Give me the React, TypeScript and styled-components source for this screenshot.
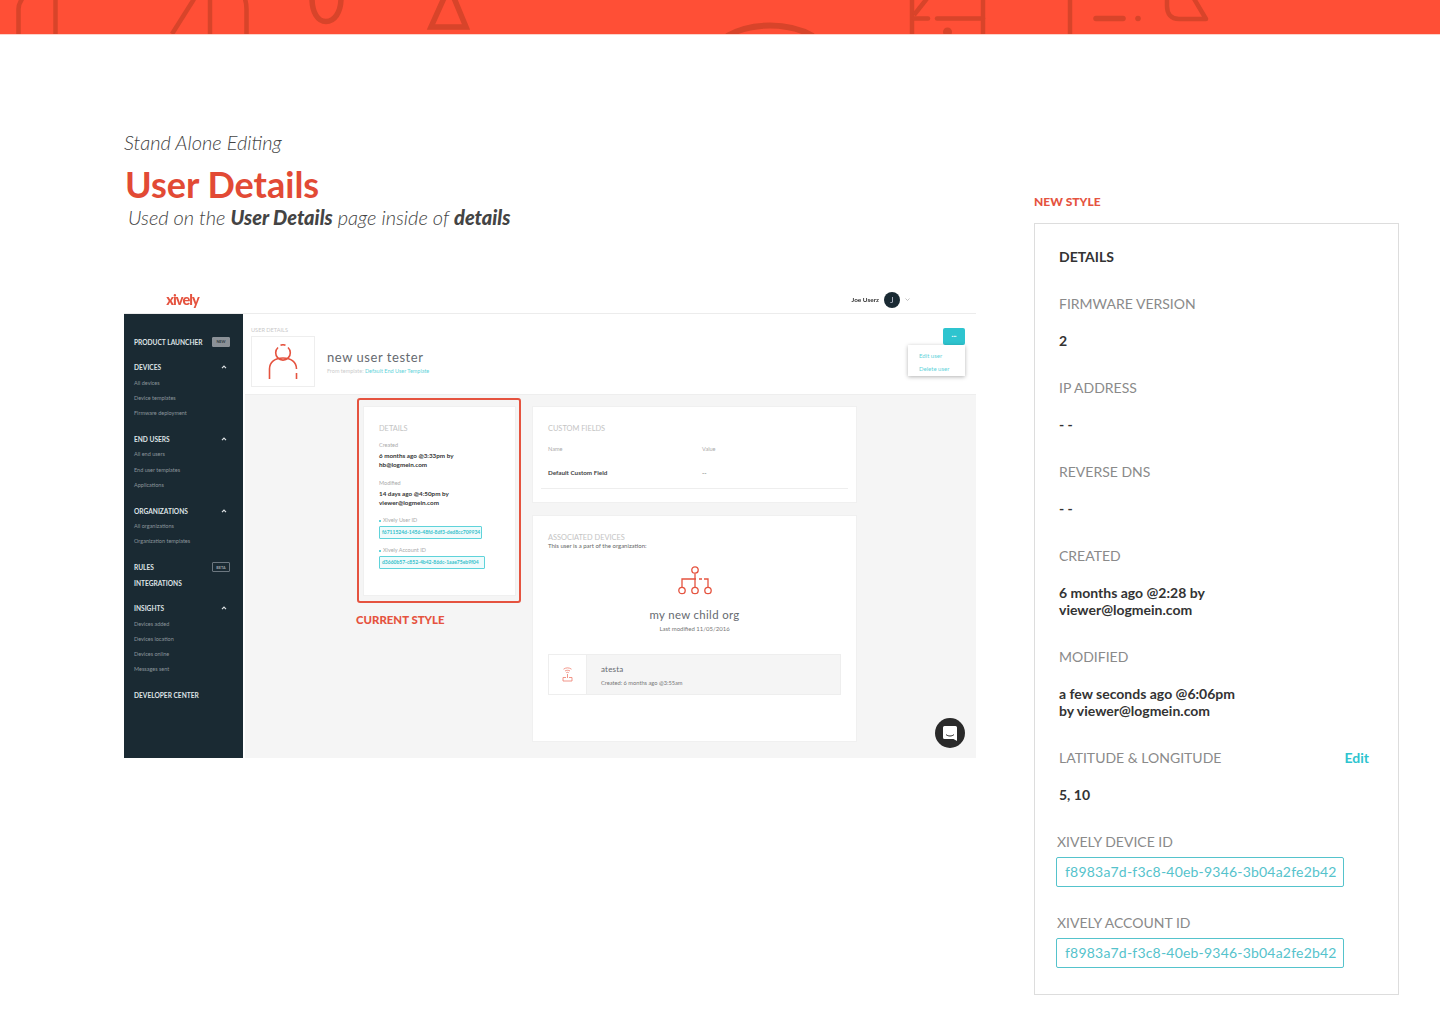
import React from "react";
import styled, { createGlobalStyle } from "styled-components";

const RED = "#e5533f";
const TEAL = "#2ec4cf";
const NAVY = "#1a2a33";
const SANS = `"Lato", "Open Sans", sans-serif`;

const GlobalStyle = createGlobalStyle`
  html, body {
    margin: 0;
    background: #fff;
    font-family: ${SANS};
  }
  * {
    box-sizing: border-box;
  }
`;

const Page = styled.div`
  width: 1440px;
  height: 1024px;
  overflow: hidden;
`;

const Banner = styled.div`
  height: 35px;
  background: #ff4f36;
  border-bottom: 1px solid #fcd3cb;

  svg {
    display: block;
  }
`;

const Main = styled.main`
  display: flex;
  padding-left: 124px;
`;

const LeftColumn = styled.section`
  width: 852px;
  margin-right: 58px;
  padding-top: 95px;
`;

const Kicker = styled.div`
  font-size: 20px;
  line-height: 24px;
  font-style: italic;
  font-weight: 300;
  color: #444;
`;

const Title = styled.h1`
  margin: 8px 0 0 1px;
  font-size: 36px;
  line-height: 44px;
  font-weight: 700;
  color: #e24a35;
`;

const Subtitle = styled.div`
  margin: -1px 0 57px 4px;
  font-size: 20px;
  line-height: 24px;
  font-style: italic;
  font-weight: 300;
  color: #444;

  b {
    font-weight: 900;
  }
`;

const Shot = styled.div`
  height: 472px;
  display: flex;
  flex-direction: column;
  filter: blur(0.25px);
`;

const ShotHeader = styled.header`
  height: 28px;
  flex: none;
  display: flex;
  align-items: center;
  justify-content: space-between;
  border-bottom: 1px solid #ececec;
  padding-right: 66px;
`;

const Logo = styled.div`
  width: 117px;
  text-align: center;
  font-size: 14.5px;
  font-weight: 900;
  letter-spacing: -0.9px;
  color: ${RED};
`;

const Account = styled.div`
  display: flex;
  align-items: center;
  font-size: 6.4px;
  font-weight: 700;
  color: #333;
`;

const AccountAvatar = styled.span`
  width: 16px;
  height: 16px;
  margin: 0 5px;
  border-radius: 50%;
  background: ${NAVY};
  color: #ccd;
  font-size: 8px;
  font-weight: 400;
  display: flex;
  align-items: center;
  justify-content: center;
`;

const ShotBody = styled.div`
  flex: 1;
  display: flex;
  min-height: 0;
`;

const Sidebar = styled.nav`
  width: 119px;
  flex: none;
  padding: 20px 13px 0 10px;
  background: ${NAVY};
`;

const NavGroup = styled.div`
  margin-bottom: 10.5px;
`;

const NavHead = styled.div`
  height: 15.3px;
  display: flex;
  align-items: center;
  justify-content: space-between;
  font-size: 6.6px;
  font-weight: 700;
  color: #dfe3e6;
  white-space: nowrap;
`;

const NavItem = styled.div`
  height: 15.3px;
  display: flex;
  align-items: center;
  font-size: 5.5px;
  color: #8b959b;
  white-space: nowrap;
`;

const NavBadge = styled.span<{ $outline?: boolean }>`
  width: 18px;
  height: 10px;
  display: flex;
  align-items: center;
  justify-content: center;
  border-radius: 1px;
  font-size: 3.8px;
  color: ${(p) => (p.$outline ? "#9aa3a9" : "#2b3840")};
  background: ${(p) => (p.$outline ? "transparent" : "#8b9197")};
  border: 1px solid ${(p) => (p.$outline ? "#6c7780" : "#8b9197")};
`;

const Chevron = styled.svg`
  width: 6px;
  height: 4px;
  margin-right: 3px;
`;

const Content = styled.div`
  flex: 1;
  min-width: 0;
  margin-left: 2px;
  display: flex;
  flex-direction: column;
  position: relative;
`;

const TopBar = styled.div`
  height: 81px;
  flex: none;
  padding: 12px 11px 0 6px;
  background: #fff;
  border-bottom: 1px solid #eee;
  position: relative;
`;

const TinyHeading = styled.div`
  height: 10px;
  font-size: 5.6px;
  line-height: 8px;
  color: #c9c9c9;
`;

const Profile = styled.div`
  display: flex;
  align-items: center;
`;

const ProfileIcon = styled.div`
  width: 64px;
  height: 51px;
  border: 1px solid #eee;
  display: flex;
  align-items: center;
  justify-content: center;
  margin-right: 12px;
`;

const ProfileName = styled.div`
  font-size: 13px;
  line-height: 16px;
  letter-spacing: 0.55px;
  color: #666a70;
`;

const ProfileMeta = styled.div`
  margin-top: 3px;
  font-size: 5.5px;
  color: #ccc;

  span {
    color: #5fd3da;
  }
`;

const MoreButton = styled.div`
  position: absolute;
  top: 14px;
  right: 11px;
  width: 22px;
  height: 17px;
  border-radius: 2px;
  background: ${TEAL};
  color: #fff;
  font-size: 7px;
  font-weight: 900;
  line-height: 13px;
  text-align: center;
`;

const Menu = styled.div`
  position: absolute;
  top: 31px;
  right: 11px;
  width: 57px;
  height: 31px;
  padding: 4px 11px;
  background: #fff;
  box-shadow: 0 1px 4px rgba(0, 0, 0, 0.3);
  font-size: 6px;
  line-height: 13px;
  color: #5fd3da;
`;

const Lower = styled.div`
  flex: 1;
  display: flex;
  align-items: flex-start;
  gap: 11px;
  padding: 3px 0 0 112px;
  background: #f5f5f5;
`;

const StyleColumn = styled.div`
  width: 164px;
`;

const Highlight = styled.div`
  height: 205px;
  padding: 6px 3px 5px 4px;
  border: 2px solid ${RED};
  border-radius: 3px;
`;

const CurrentStyle = styled.div`
  margin: 10px 0 0 -1px;
  font-size: 11.4px;
  line-height: 14px;
  font-weight: 900;
  color: ${RED};
`;

const Card = styled.div<{ $height: number }>`
  height: ${(p) => p.$height}px;
  padding: 17px 15px 0;
  background: #fff;
  border: 1px solid #f0f0f0;
`;

const CardColumn = styled.div`
  width: 325px;
  margin-top: 8px;
  display: flex;
  flex-direction: column;
  gap: 12px;
`;

const CardHeading = styled.div`
  font-size: 7.4px;
  line-height: 9px;
  color: #c4c4c4;
`;

const MiniLabel = styled.div<{ $gap?: number }>`
  margin-top: ${(p) => p.$gap ?? 0}px;
  font-size: 5.5px;
  line-height: 8px;
  color: #aaa;
`;

const MiniValue = styled.div`
  margin-top: 2px;
  font-size: 6.3px;
  line-height: 9.3px;
  font-weight: 700;
  color: #333;
`;

const MiniId = styled.div<{ $width: number }>`
  width: ${(p) => p.$width}px;
  height: 13px;
  margin-top: 2px;
  padding-left: 2px;
  border: 1px solid #5fd3da;
  border-radius: 1px;
  background: #effbfc;
  font-size: 5px;
  font-weight: 700;
  line-height: 11px;
  color: #35bfca;
  white-space: nowrap;
`;

const Dot = styled.i`
  display: inline-block;
  width: 2px;
  height: 2px;
  margin-right: 2px;
  border-radius: 50%;
  background: ${TEAL};
  vertical-align: middle;
`;

const FieldGrid = styled.div`
  display: grid;
  grid-template-columns: 154px 1fr;
  margin-top: 12px;
  font-size: 5.6px;
  line-height: 8px;
  color: #aaa;
`;

const FieldRow = styled(FieldGrid)`
  margin-top: 16px;
  color: #555;
  font-size: 6.3px;

  b {
    font-weight: 700;
    color: #444;
  }
`;

const Rule = styled.hr`
  margin: 11px -7px 0;
  border: 0;
  border-top: 1px solid #eee;
`;

const OrgIntro = styled.div`
  font-size: 6px;
  line-height: 8px;
  color: #666;
`;

const OrgBlock = styled.div`
  margin-top: 16px;
  display: flex;
  flex-direction: column;
  align-items: center;
`;

const OrgName = styled.div`
  margin-top: 12px;
  font-size: 11.4px;
  line-height: 14px;
  letter-spacing: 0.35px;
  color: #666a70;
`;

const OrgDate = styled.div`
  margin-top: 3px;
  font-size: 6px;
  line-height: 8px;
  color: #777;
`;

const DeviceRow = styled.div`
  height: 41px;
  margin-top: 21px;
  display: flex;
  background: #f5f5f5;
  border: 1px solid #eee;
`;

const DeviceIcon = styled.div`
  width: 38px;
  flex: none;
  display: flex;
  align-items: center;
  justify-content: center;
  background: #fff;
  border-right: 1px solid #eee;
`;

const DeviceText = styled.div`
  padding: 9px 0 0 14px;
`;

const DeviceName = styled.div`
  font-size: 8px;
  line-height: 10px;
  letter-spacing: 0.2px;
  color: #666a70;
`;

const DeviceMeta = styled.div`
  margin-top: 5px;
  font-size: 5.7px;
  line-height: 8px;
  color: #777;
`;

const ChatButton = styled.div`
  position: absolute;
  right: 11px;
  bottom: 10px;
  width: 30px;
  height: 30px;
  border-radius: 50%;
  background: #2a2a2a;
  display: flex;
  align-items: center;
  justify-content: center;
`;

const RightColumn = styled.aside`
  width: 365px;
  padding-top: 160px;
`;

const PanelCaption = styled.div`
  font-size: 12px;
  line-height: 14px;
  font-weight: 900;
  color: ${RED};
  margin-bottom: 14px;
`;

const Panel = styled.div`
  border: 1px solid #ddd;
  padding: 24px 0 25px;
  height: 772px;
`;

const PanelHeading = styled.div`
  padding-left: 24px;
  margin-bottom: 30px;
  font-size: 14px;
  line-height: 17px;
  font-weight: 700;
  color: #333;
`;

const Field = styled.div`
  padding: 0 29px 0 24px;
  margin-bottom: 30px;
`;

const FieldHead = styled.div`
  display: flex;
  justify-content: space-between;
`;

const Label = styled.div`
  font-size: 14px;
  line-height: 17px;
  color: #8a8a8a;
`;

const EditLink = styled.div`
  font-size: 14px;
  line-height: 17px;
  font-weight: 700;
  color: ${TEAL};
`;

const Value = styled.div`
  margin-top: 20px;
  font-size: 14px;
  line-height: 17px;
  font-weight: 700;
  color: #333;
`;

const IdField = styled.div`
  padding-left: 21px;
  margin-top: 27px;

  ${Label} {
    padding-left: 1px;
  }
`;

const IdBox = styled.div`
  width: 288px;
  height: 30px;
  margin-top: 7px;
  padding-left: 8px;
  border: 1px solid #55c3cc;
  border-radius: 2px;
  font-size: 14px;
  line-height: 28px;
  letter-spacing: 0.2px;
  color: #55c3cc;
  white-space: nowrap;
`;

const BannerPattern = () => (
  <svg width="1440" height="34" viewBox="0 0 1440 34" fill="none" stroke="#d8442a" strokeWidth="4.5">
    <path d="M18.5 34V9C18.5 5 20 2 22 -1" />
    <path d="M55.5 0V34" />
    <path d="M172 34L194 -1" />
    <path d="M210 0V34" />
    <path d="M246.5 34V9C246.5 5 246 2 245 -1" />
    <path d="M312 -2C312 13 318 21.5 326 21.5C334 21.5 341 13 341 -2" strokeWidth="5.5" />
    <path d="M444 -2L431 27H466L454 -2" strokeWidth="5.5" />
    <path d="M727 36C752 22 788 22 813 36" strokeWidth="6" />
    <path d="M912 0V34" />
    <path d="M914 15L929 -4" />
    <path d="M914 18.5H928" strokeLinecap="round" />
    <path d="M937 18.5H983" strokeLinecap="round" />
    <path d="M983 0V34" />
    <circle cx="947.5" cy="32" r="4.5" fill="#d8442a" stroke="none" />
    <path d="M1070 0V34" />
    <path d="M1096 18.5H1123" strokeWidth="5.5" strokeLinecap="round" />
    <circle cx="1138" cy="18.5" r="2.8" fill="#d8442a" stroke="none" />
    <path d="M1167 -2V6C1167 14 1171 19 1179 19H1206L1193 -3" strokeLinejoin="round" />
  </svg>
);

const PersonIcon = () => (
  <svg width="30" height="36" viewBox="0 0 30 36" fill="none" stroke={RED} strokeWidth="1.6">
    <path d="M12.5 1.2a7.2 7.2 0 0 1 5 0" />
    <path d="M10 3.5a7.3 7.3 0 1 0 10 0" />
    <path d="M1.5 35V25C1.5 18 7 14 15 14C23 14 28.5 18 28.5 25" />
    <path d="M28.5 29V35" />
  </svg>
);

const OrgIcon = () => (
  <svg width="34" height="30" viewBox="0 0 34 30" fill="none" stroke={RED} strokeWidth="1.3">
    <circle cx="17" cy="4" r="3.2" />
    <path d="M17 7.5V21" />
    <path d="M4 21V13H18M21 13H24M26 13H30V21" />
    <circle cx="4" cy="24.5" r="3.2" />
    <circle cx="17" cy="24.5" r="3.2" />
    <circle cx="30" cy="24.5" r="3.2" />
  </svg>
);

const DeviceGlyph = () => (
  <svg width="11" height="15" viewBox="0 0 11 15" fill="none" stroke="#ee7c6c" strokeWidth="0.8">
    <path d="M1.5 2.2C4 .4 7 .4 9.5 2.2M3 4C4.5 3 6.5 3 8 4M4.2 5.7C5 5.2 6 5.2 6.8 5.7" />
    <path d="M5.5 7V11M1 10.5V14H10V10.5H7M4 10.5H1" />
  </svg>
);

const NavChevron = () => (
  <Chevron viewBox="0 0 6 4" fill="none" stroke="#dfe3e6" strokeWidth="1.2">
    <path d="M1 3.2L3 1.2L5 3.2" />
  </Chevron>
);

const navGroups = [
  { title: "DEVICES", items: ["All devices", "Device templates", "Firmware deployment"] },
  { title: "END USERS", items: ["All end users", "End user templates", "Applications"] },
  { title: "ORGANIZATIONS", items: ["All organizations", "Organization templates"] }
];

const insights = ["Devices added", "Devices location", "Devices online", "Messages sent"];

const detailFields = [
  { label: "FIRMWARE VERSION", value: ["2"] },
  { label: "IP ADDRESS", value: ["- -"] },
  { label: "REVERSE DNS", value: ["- -"] },
  { label: "CREATED", value: ["6 months ago @2:28 by", "viewer@logmein.com"] },
  { label: "MODIFIED", value: ["a few seconds ago @6:06pm", "by viewer@logmein.com"] }
];

const DEVICE_ID = "f8983a7d-f3c8-40eb-9346-3b04a2fe2b42";

const App: React.FC = () => {
  return (
    <Page>
      <GlobalStyle />
      <Banner>
        <BannerPattern />
      </Banner>
      <Main>
        <LeftColumn>
          <Kicker>Stand Alone Editing</Kicker>
          <Title>User Details</Title>
          <Subtitle>
            Used on the <b>User Details</b> page inside of <b>details</b>
          </Subtitle>
          <Shot>
            <ShotHeader>
              <Logo>xively</Logo>
              <Account>
                Joe Userz
                <AccountAvatar>J</AccountAvatar>
                <svg width="5" height="3" viewBox="0 0 5 3" fill="none" stroke="#aaa" strokeWidth="0.7">
                  <path d="M.5.5L2.5 2.5L4.5.5" />
                </svg>
              </Account>
            </ShotHeader>
            <ShotBody>
              <Sidebar>
                <NavGroup>
                  <NavHead>
                    PRODUCT LAUNCHER
                    <NavBadge>NEW</NavBadge>
                  </NavHead>
                </NavGroup>
                {navGroups.map((group) => (
                  <NavGroup key={group.title}>
                    <NavHead>
                      {group.title}
                      <NavChevron />
                    </NavHead>
                    {group.items.map((item) => (
                      <NavItem key={item}>{item}</NavItem>
                    ))}
                  </NavGroup>
                ))}
                <NavGroup>
                  <NavHead>
                    RULES
                    <NavBadge $outline>BETA</NavBadge>
                  </NavHead>
                  <NavHead>INTEGRATIONS</NavHead>
                </NavGroup>
                <NavGroup>
                  <NavHead>
                    INSIGHTS
                    <NavChevron />
                  </NavHead>
                  {insights.map((item) => (
                    <NavItem key={item}>{item}</NavItem>
                  ))}
                </NavGroup>
                <NavHead>DEVELOPER CENTER</NavHead>
              </Sidebar>
              <Content>
                <TopBar>
                  <TinyHeading>USER DETAILS</TinyHeading>
                  <Profile>
                    <ProfileIcon>
                      <PersonIcon />
                    </ProfileIcon>
                    <div>
                      <ProfileName>new user tester</ProfileName>
                      <ProfileMeta>
                        From template: <span>Default End User Template</span>
                      </ProfileMeta>
                    </div>
                  </Profile>
                  <MoreButton>...</MoreButton>
                  <Menu>
                    Edit user
                    <br />
                    Delete user
                  </Menu>
                </TopBar>
                <Lower>
                  <StyleColumn>
                    <Highlight>
                      <Card $height={190}>
                        <CardHeading>DETAILS</CardHeading>
                        <MiniLabel $gap={8}>Created</MiniLabel>
                        <MiniValue>
                          6 months ago @3:33pm by
                          <br />
                          hb@logmein.com
                        </MiniValue>
                        <MiniLabel $gap={9}>Modified</MiniLabel>
                        <MiniValue>
                          14 days ago @4:50pm by
                          <br />
                          viewer@logmein.com
                        </MiniValue>
                        <MiniLabel $gap={9}>
                          <Dot />
                          Xively User ID
                        </MiniLabel>
                        <MiniId $width={103}>f6711524d-1456-48fd-8df3-ded8cc709934</MiniId>
                        <MiniLabel $gap={7}>
                          <Dot />
                          Xively Account ID
                        </MiniLabel>
                        <MiniId $width={106}>d3660b57-c852-4b42-86dc-1aae75eb9f04</MiniId>
                      </Card>
                    </Highlight>
                    <CurrentStyle>CURRENT STYLE</CurrentStyle>
                  </StyleColumn>
                  <CardColumn>
                    <Card $height={97}>
                      <CardHeading>CUSTOM FIELDS</CardHeading>
                      <FieldGrid>
                        <span>Name</span>
                        <span>Value</span>
                      </FieldGrid>
                      <FieldRow>
                        <b>Default Custom Field</b>
                        <span>--</span>
                      </FieldRow>
                      <Rule />
                    </Card>
                    <Card $height={227}>
                      <CardHeading>ASSOCIATED DEVICES</CardHeading>
                      <OrgIntro>This user is a part of the organization:</OrgIntro>
                      <OrgBlock>
                        <OrgIcon />
                        <OrgName>my new child org</OrgName>
                        <OrgDate>Last modified 11/05/2016</OrgDate>
                      </OrgBlock>
                      <DeviceRow>
                        <DeviceIcon>
                          <DeviceGlyph />
                        </DeviceIcon>
                        <DeviceText>
                          <DeviceName>atesta</DeviceName>
                          <DeviceMeta>Created: 6 months ago @3:55am</DeviceMeta>
                        </DeviceText>
                      </DeviceRow>
                    </Card>
                  </CardColumn>
                </Lower>
                <ChatButton>
                  <svg width="14" height="15" viewBox="0 0 14 15">
                    <path d="M1.5 0H12.5A1.5 1.5 0 0 1 14 1.5V15L10.5 13H1.5A1.5 1.5 0 0 1 0 11.5V1.5A1.5 1.5 0 0 1 1.5 0Z" fill="#fff" />
                    <path d="M3 8.5C5 10.5 9 10.5 11 8.5" fill="none" stroke="#2a2a2a" strokeWidth="1" />
                  </svg>
                </ChatButton>
              </Content>
            </ShotBody>
          </Shot>
        </LeftColumn>
        <RightColumn>
          <PanelCaption>NEW STYLE</PanelCaption>
          <Panel>
            <PanelHeading>DETAILS</PanelHeading>
            {detailFields.map((field) => (
              <Field key={field.label}>
                <Label>{field.label}</Label>
                <Value>
                  {field.value.map((line) => (
                    <div key={line}>{line}</div>
                  ))}
                </Value>
              </Field>
            ))}
            <Field>
              <FieldHead>
                <Label>LATITUDE &amp; LONGITUDE</Label>
                <EditLink>Edit</EditLink>
              </FieldHead>
              <Value>5, 10</Value>
            </Field>
            <IdField>
              <Label>XIVELY DEVICE ID</Label>
              <IdBox>{DEVICE_ID}</IdBox>
            </IdField>
            <IdField>
              <Label>XIVELY ACCOUNT ID</Label>
              <IdBox>{DEVICE_ID}</IdBox>
            </IdField>
          </Panel>
        </RightColumn>
      </Main>
    </Page>
  );
};

export default App;
